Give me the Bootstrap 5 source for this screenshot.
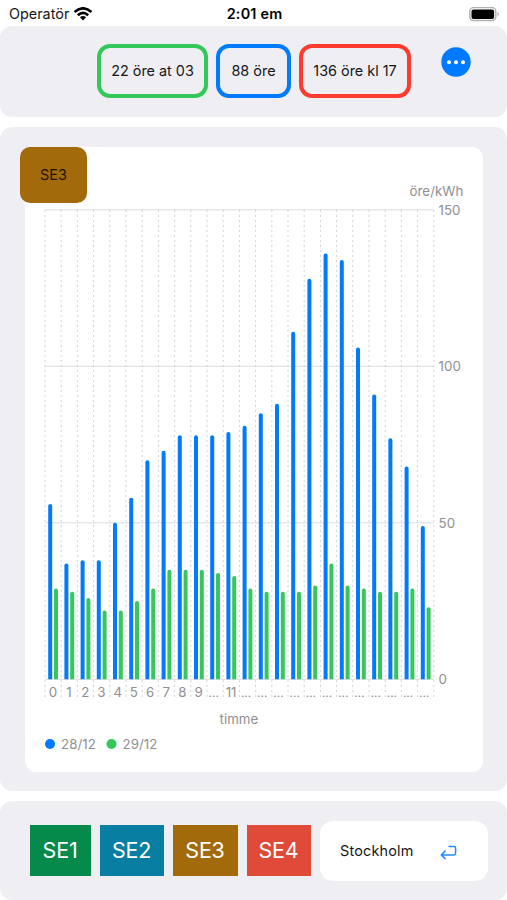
<!DOCTYPE html>
<html lang="sv">
<head>
<meta charset="utf-8">
<meta name="viewport" content="width=device-width, initial-scale=1">
<title>Elpris</title>
<link href="https://cdn.jsdelivr.net/npm/bootstrap@5.3.0/dist/css/bootstrap.min.css" rel="stylesheet">
<style>
body{font-family:Inter,"Liberation Sans",sans-serif;font-size:14.4px;line-height:20px;color:#161618;background:#fff;height:900px;overflow:hidden}
.status{height:26px;padding:2px 7px 0 9px}
.status>*{flex:1}
.clock{letter-spacing:.2px}
.sections{gap:10px}
.panel{background:#efeef3;border-radius:12px}
.summary{height:91px;padding:18px 0 0 97px}
.price{height:54px;border:4px solid;border-radius:13px}
.price span{color:#161618;white-space:nowrap}
.low{width:111px;border-color:#34c759}
.now{width:75px;border-color:#007aff}
.high{width:112px;border-color:#ff3b30}
.more{width:30px;height:30px;margin:2.5px 0 0 29.5px}
.chart-panel{height:664px;padding:20px 24px 19px 25px}
.chart-card{border-radius:11px;height:625px;background:#fff}
.zone-tag{left:-5px;top:0;width:67px;height:56px;border-radius:10px;background:#a36a0b;color:#1d1300}
.footer-panel{height:99px;padding:0 19px 0 30px;gap:9px}
.zone{height:51px;border:0;border-radius:0;color:#fff;font-size:21.5px;padding:0 1px 0 0;letter-spacing:-.2px}
.z1{width:61px;background:#068a4b}.z2{width:64px;background:#077ea2}.z3{width:65px;background:#a36a0b}.z4{width:64px;background:#df4b38}
.city{width:168px;height:60px;border-radius:13px;background:#fff;padding:0 31px 0 20px;letter-spacing:.2px}
svg text{font-size:13.3px;fill:#8f8f92;letter-spacing:.05px}
svg text.dots{font-size:12px;letter-spacing:0}
</style>
<script src="https://cdn.jsdelivr.net/npm/bootstrap@5.3.0/dist/js/bootstrap.bundle.min.js"></script>
</head>
<body class="d-flex flex-column">
<header class="status d-flex align-items-center">
  <div class="d-flex align-items-center"><span>Operatör</span>
    <svg class="ms-1" width="20" height="15" viewBox="0 0 20 15" fill="none" stroke="#000" stroke-width="2.6"><path d="M1.6 5Q10-2.4 18.4 5M4.8 8.2Q10 3.4 15.2 8.2"/><path d="M10 13.5 6.9 10.3Q10 7.9 13.1 10.3Z" fill="#000" stroke="none"/></svg>
  </div>
  <div class="clock text-center fw-semibold text-black">2:01 em</div>
  <div class="text-end lh-1"><svg width="31" height="15" viewBox="0 0 31 15"><rect x=".8" y=".6" width="26" height="13" rx="3.8" fill="#fff" stroke="#b2b2b2" stroke-width="1.5"/><rect x="2.5" y="2.4" width="22.6" height="9.5" rx="2" fill="#000"/><path d="M28.5 4.8q3 2.3 0 4.6z" fill="#b2b2b2"/></svg></div>
</header>
<main class="sections d-flex flex-column">
  <section class="panel summary d-flex align-items-start">
    <div class="d-flex gap-2">
      <div class="price low d-flex align-items-center justify-content-center"><span>22 öre at 03</span></div>
      <div class="price now d-flex align-items-center justify-content-center"><span>88 öre</span></div>
      <div class="price high d-flex align-items-center justify-content-center"><span>136 öre kl 17</span></div>
    </div>
    <button class="btn more p-0 border-0 d-flex" aria-label="Mer"><svg width="30" height="30"><circle cx="15" cy="15" r="14.7" fill="#007aff"/><g fill="#fff"><circle cx="8" cy="15.2" r="2"/><circle cx="15" cy="15.2" r="2"/><circle cx="22" cy="15.2" r="2"/></g></svg></button>
  </section>
  <section class="panel chart-panel">
    <div class="chart-card position-relative">
      <svg id="chart" class="d-block" width="458" height="625" viewBox="25 147 458 625"></svg>
      <div class="zone-tag position-absolute d-flex align-items-center justify-content-center">SE3</div>
    </div>
  </section>
  <section class="panel footer-panel d-flex align-items-center">
    <button class="btn zone z1">SE1</button>
    <button class="btn zone z2">SE2</button>
    <button class="btn zone z3">SE3</button>
    <button class="btn zone z4">SE4</button>
    <div class="city d-flex align-items-center justify-content-between"><span>Stockholm</span>
      <svg width="17" height="18" viewBox="0 -2 17 18" fill="none" stroke="#2389ff" stroke-width="1.5" stroke-linecap="round" stroke-linejoin="round"><path d="M9 2.4H14Q15.6 2.4 15.6 4V9.3Q15.6 10.9 14 10.9H1.3M5.2 7 1.3 10.9 5.2 14.8"/></svg>
    </div>
  </section>
</main>
<script>
const today=[56,37,38,38,50,58,70,73,78,78,78,79,81,85,88,111,128,136,134,106,91,77,68,49];
const tomorrow=[29,28,26,22,22,25,29,35,35,35,34,33,29,28,28,28,30,37,30,29,28,28,29,23];
const left=45,right=433.8,base=679.3,step=(right-left)/24,unit=3.13;
let out='';
for(const v of [0,50,100,150]){
  const y=base-v*unit;
  out+=`<line x1="${left}" x2="${right}" y1="${y}" y2="${y}" stroke="#dcdcde"/><text x="438.5" y="${y+4.7}">${v}</text>`;
}
for(let i=0;i<=24;i++){
  const x=left+i*step;
  out+=`<line x1="${x}" x2="${x}" y1="210" y2="700" stroke="#d3d3d5" stroke-dasharray="2 3"/>`;
}
const bar=(x,v,c)=>{const t=base-v*unit;return `<path d="M${x-2} ${base}V${t+2}a2 2 0 0 1 4 0V${base}z" fill="${c}"/>`;};
for(let i=0;i<24;i++){
  const x=left+i*step;
  out+=bar(x+5.2,today[i],'#007aff')+bar(x+11,tomorrow[i],'#34c759');
  const label=i<10||i===11;
  out+=`<text x="${x+(label?7.9:6.7)}" y="697" text-anchor="middle"${label?'':' class="dots"'}>${label?i:'...'}</text>`;
}
out+='<text x="409.5" y="196">öre/kWh</text><text x="219.5" y="724">timme</text>';
out+='<circle cx="50" cy="744" r="5" fill="#007aff"/><text x="61" y="749">28/12</text><circle cx="111.5" cy="744" r="5" fill="#34c759"/><text x="122.5" y="749">29/12</text>';
document.getElementById('chart').innerHTML=out;
</script>
</body>
</html>
